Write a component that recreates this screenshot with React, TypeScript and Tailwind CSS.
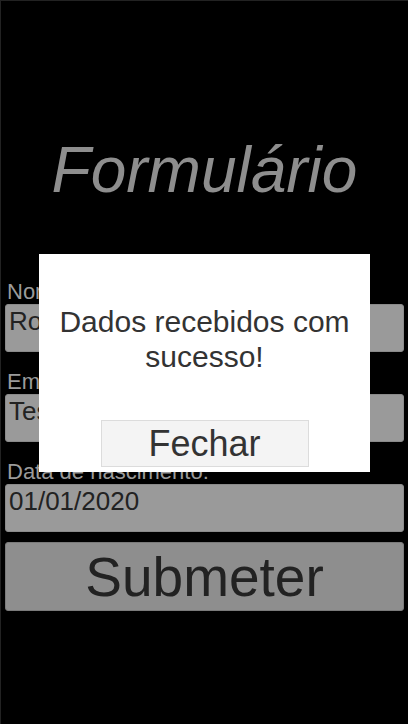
import React from 'react';

const fields = [
  { label: 'Nome:', value: 'Rodrigo' },
  { label: 'Email:', value: 'Teste@gmail.com' },
  { label: 'Data de nascimento:', value: '01/01/2020' },
];

const App: React.FC = () => {
  return (
    <div
      className="relative w-[408px] h-[724px] overflow-hidden bg-black border-t border-l border-[#222]"
      style={{ fontFamily: '"Liberation Sans", Arial, sans-serif' }}
    >
      {/* Title */}
      <h1 className="pt-[133px] text-center text-[64px] leading-[72px] italic text-[#8e8e8e]">
        Formulário
      </h1>

      {/* Form */}
      <div className="mt-[73px] px-[4px] flex flex-col">
        {fields.map((field, index) => (
          <div key={index} className={index > 0 ? 'mt-[17px]' : ''}>
            <label className="block pl-[2px] text-[22px] leading-[25px] text-[#9b9b9b]">
              {field.label}
            </label>
            <div className="h-[48px] w-[399px] rounded-[3px] border border-[#8a8a8a] bg-[#9a9a9a] pl-[3px] pt-[3px] text-[26px] leading-[26px] text-[#222]">
              {field.value}
            </div>
          </div>
        ))}
        <button className="mt-[10px] h-[69px] w-[399px] rounded-[3px] border border-[#7a7a7a] bg-[#8e8e8e] text-[55px] leading-[60px] text-[#222]">
          Submeter
        </button>
      </div>

      {/* Modal */}
      <div className="absolute left-[38px] top-[253px] w-[331px] h-[218px] bg-white flex flex-col items-center">
        <p className="mt-[50px] px-2 text-center text-[30px] leading-[35px] text-[#333]">
          Dados recebidos com sucesso!
        </p>
        <button className="mt-[46px] h-[47px] w-[208px] border border-[#dcdcdc] bg-[#f4f4f4] text-[36px] leading-[44px] text-[#333]">
          Fechar
        </button>
      </div>
    </div>
  );
};

export default App;
